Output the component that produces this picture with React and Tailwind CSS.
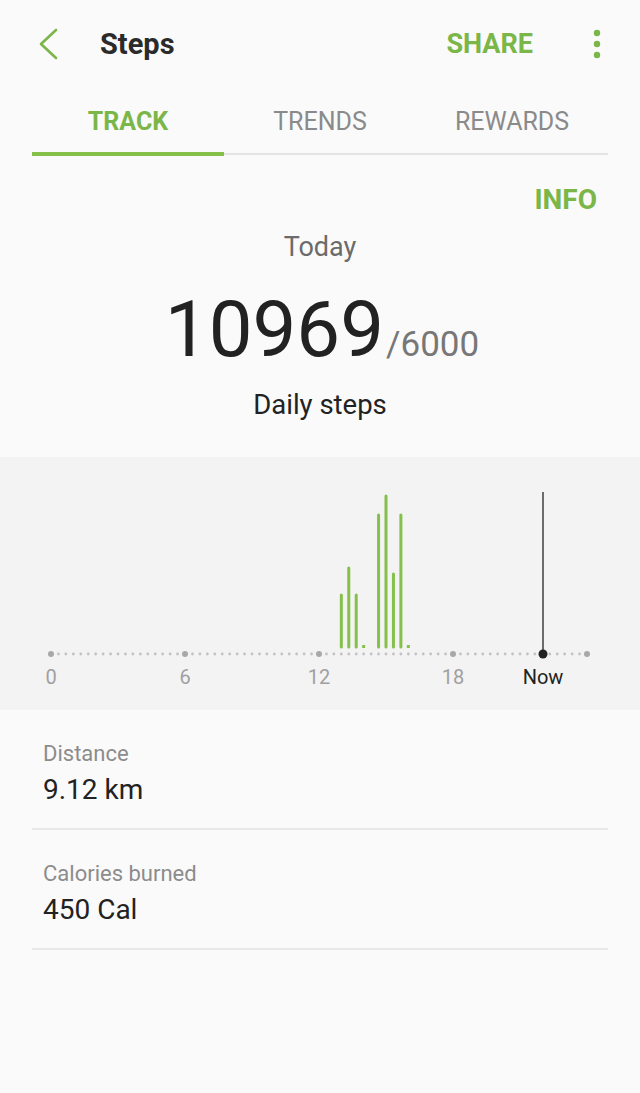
import React from "react";

const GREEN = "#7ab648";

// bars sit on the 20-minute grid (index k from midnight)
const bars = [
  { k: 39, top: 138 },
  { k: 40, top: 111 },
  { k: 41, top: 138 },
  { k: 44, top: 58 },
  { k: 45, top: 39 },
  { k: 46, top: 117 },
  { k: 47, top: 58 },
];
const stubs = [42, 48];

const STEP = 134 / 18;
const X0 = 51;
const AXIS_Y = 197;

const StepsChart = () => {
  const dots = [];
  for (let i = 0; i <= 72; i++) {
    const big = i % 18 === 0;
    dots.push(
      <circle
        key={i}
        cx={X0 + i * STEP}
        cy={AXIS_Y}
        r={big ? 3 : 1.4}
        fill={big ? "#a8a8a8" : "#c2c2c2"}
      />
    );
  }

  return (
    <svg width="640" height="253" viewBox="0 0 640 253" className="block">
      {dots}
      {bars.map((b) => (
        <line
          key={b.k}
          x1={X0 + b.k * STEP}
          x2={X0 + b.k * STEP}
          y1={b.top}
          y2={190}
          stroke="#84c04a"
          strokeWidth="3"
          strokeLinecap="round"
        />
      ))}
      {stubs.map((k) => (
        <rect key={k} x={X0 + k * STEP - 1.5} y={188} width="3" height="3" fill="#84c04a" />
      ))}
      <line x1="543" x2="543" y1="35" y2="197" stroke="#222" strokeWidth="1.3" />
      <circle cx="543" cy="197" r="4.5" fill="#222" />
      <g fontFamily="Roboto, sans-serif" fontSize="20" textAnchor="middle" fill="#a0a0a0">
        <text x="51" y="227">0</text>
        <text x="185" y="227">6</text>
        <text x="319" y="227">12</text>
        <text x="453" y="227">18</text>
        <text x="543" y="227" fill="#222">Now</text>
      </g>
    </svg>
  );
};

const StatRow = ({ label, value }) => (
  <div className="mx-8 pt-[30px] pb-[22px] border-b-2 border-[#e8e8e8]">
    <div className="pl-[11px] text-[22px] leading-[28px] text-[#8c8c8c]">{label}</div>
    <div className="pl-[11px] mt-[5px] text-[28px] leading-[33px] text-[#222]">{value}</div>
  </div>
);

export default function App() {
  return (
    <div
      className="w-[640px] min-h-[1093px] bg-[#fafafa]"
      style={{ fontFamily: "Roboto, 'Noto Sans', sans-serif" }}
    >
      {/* header */}
      <div className="h-[88px] flex items-center">
        <div className="w-[100px] pl-[38px] flex items-center">
          <svg width="22" height="32" viewBox="0 0 22 32">
            <polyline
              points="18,2 3,16 18,30"
              fill="none"
              stroke={GREEN}
              strokeWidth="2.6"
              strokeLinecap="round"
              strokeLinejoin="round"
            />
          </svg>
        </div>
        <h1 className="text-[29px] leading-[34px] font-bold text-[#2b2b2b]">Steps</h1>
        <div className="flex-1" />
        <span className="text-[27px] leading-[32px] font-bold text-[#7ab648]">SHARE</span>
        <div className="ml-[60px] mr-[39px] flex items-center">
          <svg width="8" height="32" viewBox="0 0 8 32">
            <circle cx="4" cy="5" r="3.2" fill={GREEN} />
            <circle cx="4" cy="16" r="3.2" fill={GREEN} />
            <circle cx="4" cy="27" r="3.2" fill={GREEN} />
          </svg>
        </div>
      </div>

      {/* tabs */}
      <div className="mx-8">
        <div className="flex pt-[19px] pb-[15px] text-[25px] leading-[30px]">
          <div className="flex-1 text-center font-bold text-[#7ab648]">TRACK</div>
          <div className="flex-1 text-center text-[#8a8a8a]">TRENDS</div>
          <div className="flex-1 text-center text-[#8a8a8a]">REWARDS</div>
        </div>
        <div className="h-1 flex items-center">
          <div className="h-1 w-[192px] bg-[#84c04a]" />
          <div className="flex-1 h-[2px] bg-[#e4e4e4]" />
        </div>
      </div>

      {/* summary */}
      <div className="flex justify-end pt-[28px] pr-[43px]">
        <span className="text-[28px] leading-[32px] font-bold text-[#7ab648]">INFO</span>
      </div>
      <div className="mt-[15px] text-center text-[27px] leading-[32px] text-[#6b6b6b]">Today</div>
      <div className="mt-[27px] flex items-baseline justify-center pl-[4px]">
        <span className="text-[78px] leading-[80px] text-[#222]">10969</span>
        <span className="ml-[2px] text-[35px] leading-none text-[#777]">/6000</span>
      </div>
      <div className="mt-[19px] text-center text-[27.5px] leading-[32px] text-[#222]">Daily steps</div>

      {/* chart */}
      <div className="mt-[36px] bg-[#f3f3f3]">
        <StepsChart />
      </div>

      {/* stats */}
      <StatRow label="Distance" value="9.12 km" />
      <StatRow label="Calories burned" value="450 Cal" />
    </div>
  );
}
